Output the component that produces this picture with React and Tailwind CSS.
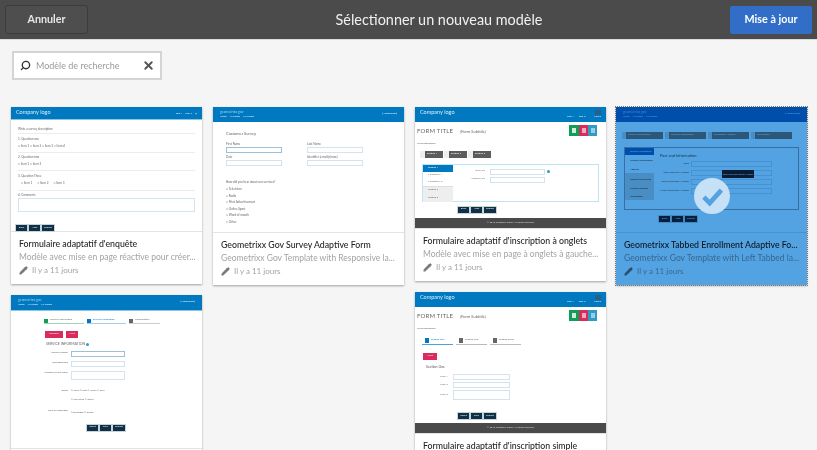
import { Search, X, Pencil } from 'lucide-react';

const T = ({ className = '', children }) => (
  <span className={`block whitespace-nowrap leading-none ${className}`}>{children}</span>
);

const Btns = ({ labels, className = '' }) => (
  <div className={`flex gap-[2px] ${className}`}>
    {labels.map((l) => (
      <span
        key={l}
        className="flex h-[6px] items-center justify-center bg-[#0f3047] px-[2px] text-[2.5px] leading-none text-white min-w-[11px] outline outline-[0.5px] outline-[#c9d3da]"
      >
        {l}
      </span>
    ))}
  </div>
);

const Input = ({ className = '' }) => (
  <div className={`h-[6px] border-[0.5px] border-[#d5e3ec] bg-white ${className}`} />
);

const Rule = ({ className = '' }) => <div className={`h-px bg-[#ececec] ${className}`} />;

const Tiles = () => (
  <div className="flex">
    <div className="flex h-[11px] w-[10px] items-center justify-center bg-[#0f9d58]"><div className="h-[5px] w-[4px] bg-white/80" /></div>
    <div className="flex h-[11px] w-[9px] items-center justify-center bg-[#d92b5c]"><div className="h-[5px] w-[4px] bg-white/60" /></div>
    <div className="flex h-[11px] w-[9px] items-center justify-center bg-[#2e9cc4]"><div className="h-[5px] w-[4px] bg-white/50" /></div>
  </div>
);

const LogoHeader = ({ small = false }) => (
  <div className={`flex justify-between bg-[#0079c1] pl-[5px] pr-[5px] ${small ? 'h-[12px] items-center' : 'h-[15px] pt-[3px]'}`}>
    <T className="text-[5.5px] text-[#d8ecf8]">Company logo</T>
    {small ? (
      <div className="mt-[2px] flex gap-[3px] text-[2.5px] leading-none text-white">
        <span>Link 1</span><span>Link 2</span><span>Q</span>
      </div>
    ) : (
      <div className="flex flex-col items-end gap-[1px]">
        <div className="h-[5px] w-[6px] rounded-[0.5px] bg-[#2a5f8a]" />
        <div className="flex gap-[5px] text-[2.5px] leading-none text-white">
          <span>Link 1</span><span>Link 2</span><span className="ml-[4px]">Link 3</span>
        </div>
      </div>
    )}
  </div>
);

const GeoHeader = () => (
  <div className="flex h-[15px] items-center justify-between bg-[#0079c1] px-[7px]">
    <div className="flex flex-col gap-[2px]">
      <T className="text-[3.5px] text-[#9fd0ee]">geometrixx gov</T>
      <div className="flex gap-[3px] text-[2.5px] leading-none text-white">
        <span>Home</span><span>All Forms</span><span>My Forms</span>
      </div>
    </div>
    <T className="text-[2.5px] text-white">[Anonymous]</T>
  </div>
);

const Thumb1 = () => (
  <div className="h-[124px] bg-white">
    <LogoHeader small />
    <div className="h-px bg-[#8cc4e6]" />
    <div className="px-[7px] pt-[8px] text-[3px] text-[#666]">
      <T>Write a survey description</T>
      <Rule className="mt-[2px]" />
      <T className="mt-[4px]">1. Question one</T>
      <T className="mt-[4px]">○ Item 1 ○ Item 2 ○ Item 3 ○ Item 4</T>
      <Rule className="mt-[4px]" />
      <T className="mt-[3px]">2. Question two</T>
      <T className="mt-[4px]">○ Item 1 ○ Item 2</T>
      <Rule className="mt-[4px]" />
      <T className="mt-[4px]">3. Question Three</T>
      <div className="mt-[4px] flex gap-[5px] pl-[3px] leading-none">
        <span>○ Item 1</span><span>○ Item 2</span><span>○ Item 3</span>
      </div>
      <Rule className="mt-[5px]" />
      <T className="mt-[3px]">4. Comments</T>
      <Input className="mt-[1px] !h-[14px]" />
      <Btns labels={['Back', 'Next', 'Submit']} className="mt-[13px] -ml-[2px]" />
    </div>
  </div>
);

const Thumb2 = () => (
  <div className="h-[125px] bg-white">
    <GeoHeader />
    <div className="pl-[13px] pt-[10px] text-[3px] text-[#666]">
      <T className="text-[4px]">Customer Survey</T>
      <div className="mt-[7px] grid w-[137px] grid-cols-2 gap-x-[25px] gap-y-[3px]">
        <div>
          <T>First Name</T>
          <Input className="mt-[1px] !border-[#9fbfd4]" />
        </div>
        <div>
          <T>Last Name</T>
          <Input className="mt-[1px]" />
        </div>
        <div>
          <T>Date</T>
          <Input className="mt-[1px]" />
        </div>
        <div>
          <T>Identifier (email/phone)</T>
          <Input className="mt-[1px]" />
        </div>
      </div>
      <T className="mt-[15px]">How did you hear about our services?</T>
      <div className="mt-[4px] flex flex-col gap-[3.5px]">
        <T>○ Television</T>
        <T>○ Radio</T>
        <T>○ Print Advertisement</T>
        <T>○ Online Sport</T>
        <T>○ Word of mouth</T>
        <T>○ Other</T>
      </div>
    </div>
  </div>
);

const FormTitle = () => (
  <div className="flex justify-between pl-[2px] pr-[9px] pt-[3px]">
    <div className="pt-[3px] text-[#666]">
      <div className="flex items-end gap-[7px]">
        <T className="text-[6px] tracking-[0.2px]">FORM TITLE</T>
        <T className="text-[4px]">(Form Subtitle)</T>
      </div>
      <T className="mt-[9px] text-[2.5px]">Form description</T>
    </div>
    <Tiles />
  </div>
);

const Footer = ({ text }) => (
  <div className="flex h-[10px] items-center justify-center bg-[#4a4a4a] text-[2.5px] leading-none text-[#ddd]">
    {text}
  </div>
);

const Thumb3 = () => (
  <div className="flex h-[121px] flex-col bg-white">
    <LogoHeader />
    <FormTitle />
    <div className="mt-[5px] flex gap-[1px] pl-[5px]">
      {['Section 1', 'Section 2', 'Section 3'].map((s) => (
        <div key={s} className="flex h-[7px] w-[23px] items-center gap-[2px] bg-[#5c5c5c] text-[2.5px] leading-none text-white">
          <div className="h-[7px] w-[5px] bg-[#eee]" />
          {s}
        </div>
      ))}
    </div>
    <div className="mx-[7px] mt-[6px] flex h-[38px] border-[0.5px] border-[#bfe4f2]">
      <div className="w-[30px] text-[2.5px] leading-none text-[#666]">
        <div className="flex h-[7px] items-center bg-[#0079c1] pl-[5px] text-white">Section 1</div>
        <div className="flex h-[8px] items-center pl-[5px]">• Section 1.1</div>
        <div className="flex h-[7px] items-center border-b-[0.5px] border-[#ddd] pl-[5px]">• Section 1.2</div>
        <div className="flex h-[8px] items-center bg-[#eee] pl-[5px]">Section 2</div>
        <div className="flex h-[7px] items-center bg-[#eee] pl-[5px]">Section 3</div>
      </div>
      <div className="flex flex-col gap-[2px] pt-[4px] text-[2.5px] leading-none text-[#777]">
        <div className="flex items-center">
          <span className="w-[32px] text-right">Text Line</span>
          <Input className="ml-[5px] w-[55px]" />
          <div className="ml-[2px] size-[3px] rounded-full bg-[#2e9cc4]" />
        </div>
        <div className="flex items-center">
          <span className="w-[32px] text-right">Number Line</span>
          <Input className="ml-[5px] w-[55px]" />
        </div>
      </div>
    </div>
    <Btns labels={['Back', 'Next', 'Submit']} className="mt-[5px] pl-[43px]" />
    <div className="flex-1" />
    <Footer text="© 2015 Company name. All rights reserved." />
  </div>
);

const Thumb4 = () => (
  <div className="relative h-[125px] bg-white">
    <GeoHeader />
    <div className="flex gap-[2px] pl-[6px] pt-[10px]">
      {['General Information', 'Personal Information', 'Residential Address', 'Verification'].map((s) => (
        <div key={s} className="flex h-[7px] w-[41px] items-center gap-[2px] bg-[#888] text-[2.5px] leading-none text-white">
          <div className="h-[7px] w-[4px] bg-[#ddd]" />
          {s}
        </div>
      ))}
    </div>
    <div className="mx-[8px] mt-[8px] flex h-[63px] border-[0.5px] border-[#aab]">
      <div className="w-[29px] text-[2.5px] leading-[3px] text-[#333]">
        <div className="flex h-[7px] items-center bg-[#0079c1] pl-[5px] text-white">Spouse Information</div>
        <div className="flex h-[11px] items-center pl-[5px]">Personal Information</div>
        <div className="flex h-[7px] items-center pl-[5px]">Address</div>
        <div className="flex h-[12px] items-center bg-[#ddd] pl-[5px]">Reason to Relocate</div>
        <div className="flex h-[7px] items-center bg-[#ddd] pl-[5px]">Financial Details</div>
        <div className="flex h-[8px] items-center bg-[#ddd] pl-[5px]">Verification</div>
      </div>
      <div className="pl-[6px] pt-[6px] text-[2.5px] text-[#555]">
        <T className="text-[4px]">Past and Information</T>
        <div className="mt-[3px] flex flex-col items-end gap-[3px]">
          {['Name', 'Social Security Number', 'Home Telephone Number', 'Mobile Telephone Number'].map((l) => (
            <div key={l} className="flex items-center gap-[2px]">
              <span className="leading-none">{l}</span>
              <Input className="w-[81px]" />
            </div>
          ))}
        </div>
      </div>
    </div>
    <Btns labels={['Back', 'Next', 'Submit']} className="mt-[6px] pl-[43px]" />
    <div className="absolute left-[106px] top-[63px] flex h-[8px] w-[32px] items-center justify-center bg-[#1d2b3a] text-center text-[2px] leading-none text-white">
      Enter your Social Security Number
    </div>
  </div>
);

const Thumb5 = () => (
  <div className="h-[153px] bg-white">
    <GeoHeader />
    <div className="h-[1px] bg-[#8cc4e6]" />
    <div className="pl-[33px] pt-[7px] text-[2.5px] text-[#666]">
      <div className="flex gap-[3px]">
        <div className="flex h-[6px] w-[40px] items-center gap-[2px] border-b border-[#9fd8b8] leading-none">
          <div className="size-[4px] bg-[#0f9d58]" />General Information
        </div>
        <div className="flex h-[6px] w-[39px] items-center gap-[2px] border-b border-[#9fd0ee] leading-none text-[#0079c1]">
          <div className="size-[4px] bg-[#0079c1]" />Service Information
        </div>
        <div className="flex h-[6px] w-[31px] items-center gap-[2px] border-b border-[#ccc] leading-none">
          <div className="size-[4px] bg-[#666]" />Confirmation
        </div>
      </div>
      <div className="mt-[7px] flex gap-[3px] pl-[1px]">
        <div className="flex h-[7px] w-[18px] items-center justify-center bg-[#d92b5c] leading-none text-white">Previous</div>
        <div className="flex h-[7px] w-[12px] items-center justify-center bg-[#d92b5c] leading-none text-white">Next</div>
      </div>
      <div className="mt-[5px] flex items-center gap-[1px] pl-[2px]">
        <T className="text-[3.5px]">SERVICE INFORMATION</T>
        <div className="size-[3px] rounded-full bg-[#2e9cc4]" />
      </div>
      <div className="mt-[4px] grid w-[81px] grid-cols-[24px_1fr] items-start gap-x-[3px] gap-y-[4px] leading-[4px]">
        <span className="text-right">Vehicle number</span>
        <Input className="!border-[#9fbfd4]" />
        <span className="text-right">Damaged part</span>
        <Input />
        <span className="text-right">Location of the repair</span>
        <Input className="!h-[9px]" />
        <span className="mt-[5px] text-right">Brand</span>
        <span className="mt-[5px] whitespace-nowrap">○ Volvo ○ Tata ○ Ashok ○ Toyo</span>
        <span />
        <span className="mt-[1px] whitespace-nowrap">○ Cool Scan ○ Other</span>
        <span className="mt-[3px] text-right">Type of Inspection</span>
        <span className="mt-[5px] whitespace-nowrap">○ Damaged ○ Rental</span>
      </div>
      <Btns labels={['Reset', 'Save', 'Submit']} className="mt-[10px] pl-[43px]" />
    </div>
  </div>
);

const Thumb6 = () => (
  <div className="flex h-[141px] flex-col bg-white">
    <LogoHeader />
    <FormTitle />
    <div className="mt-[6px] flex gap-[3px] pl-[7px] text-[2.5px] text-[#666]">
      {['Section One', 'Section Two', 'Section Three'].map((s, i) => (
        <div key={s} className={`flex h-[8px] w-[31px] items-center gap-[2px] border-b pl-[3px] leading-none ${i === 0 ? 'border-[#4aa3d8] text-[#0079c1]' : 'border-[#bbb]'}`}>
          <div className={`h-[5px] w-[4px] ${i === 0 ? 'bg-[#0079c1]' : 'bg-[#666]'}`} />
          {s}
        </div>
      ))}
    </div>
    <div className="ml-[8px] mt-[8px] flex h-[7px] w-[14px] items-center justify-center bg-[#d92b5c] text-[2.5px] leading-none text-white">
      Next
    </div>
    <T className="ml-[11px] mt-[6px] text-[3.5px] text-[#555]">Section One</T>
    <div className="mt-[5px] grid w-[95px] grid-cols-[33px_1fr] items-center gap-x-[5px] gap-y-[2px] text-right text-[2.5px] leading-none text-[#777]">
      <span>Label 1</span><Input />
      <span>Label 2</span><Input />
      <span>Label 3</span><Input className="!h-[10px]" />
    </div>
    <Btns labels={['Reset', 'Save', 'Submit']} className="mt-[13px] pl-[43px]" />
    <div className="flex-1" />
    <Footer text="© 2015 Company name. All rights reserved." />
  </div>
);

const Card = ({ thumb, title, desc, selected = false }) => (
  <div className={`relative overflow-hidden bg-white shadow-[0_1px_2px_rgba(0,0,0,0.35)] ${selected ? 'outline-1 outline-dotted outline-[#777]' : ''}`}>
    <div className="blur-[0.3px]">{thumb}</div>
    <div className="border-t border-[#e3e3e3] px-[8px] pb-[8px] pt-[5px]">
      {title && <div className="whitespace-nowrap text-[8.75px] font-medium leading-[14px] text-[#1f1f1f]">{title}</div>}
      {desc && (
        <>
          <div className="whitespace-nowrap text-[8.5px] leading-[13px] text-[#a3a3a3]">{desc}</div>
          <div className="flex items-center gap-[4px] text-[8px] leading-[12px] text-[#a3a3a3]">
            <Pencil size={9} className="text-[#777]" fill="currentColor" />
            <span>Il y a 11 jours</span>
          </div>
        </>
      )}
    </div>
    {selected && (
      <>
        <div className="absolute inset-0 bg-[#53a3e3] mix-blend-multiply" />
        <div className="absolute left-[78px] top-[71px] flex size-[36px] items-center justify-center rounded-full bg-[#c6e0f6]">
          <svg viewBox="0 0 24 24" className="size-[28px]" fill="none" stroke="#53a3e3" strokeWidth="4">
            <path d="M5 13l5 5 10-11" />
          </svg>
        </div>
      </>
    )}
  </div>
);

export default function App() {
  return (
    <div className="h-[450px] overflow-hidden bg-[#f5f5f5] font-['Lato',sans-serif]">
      <header className="box-content flex h-[39px] items-center justify-between border-b border-[#dcdcdc] bg-[#4b4b4b] pl-[5px] pr-[5px]">
        <button className="h-[29px] w-[83px] rounded-[3px] border border-[#3c3c3c] bg-[#4e4e4e] text-[10.75px] font-bold text-[#e6e6e6]">
          Annuler
        </button>
        <h1 className="ml-[60px] text-[14.4px] text-[#f0f0f0]">Sélectionner un nouveau modèle</h1>
        <button className="h-[28px] w-[82px] rounded-[2px] bg-[#326ec8] text-[10.75px] font-bold text-white">
          Mise à jour
        </button>
      </header>

      <div className="ml-[12px] mt-[11px] flex h-[29px] w-[150px] items-center border-2 border-[#d4d4d4] bg-white pl-[6px] pr-[5px]">
        <Search size={11} strokeWidth={3} className="-scale-x-100 text-[#333]" />
        <span className="ml-[5px] flex-1 whitespace-nowrap text-[9px] text-[#9a9a9a]">Modèle de recherche</span>
        <X size={13} strokeWidth={3.5} className="text-[#555]" />
      </div>

      <div className="mt-[27px] flex gap-[11px] pl-[11px]">
        <div className="flex w-[191px] flex-col gap-[11px]">
          <Card
            thumb={<Thumb1 />}
            title="Formulaire adaptatif d'enquête"
            desc="Modèle avec mise en page réactive pour créer..."
          />
          <Card thumb={<Thumb5 />} />
        </div>
        <div className="flex w-[191px] flex-col gap-[11px]">
          <Card
            thumb={<Thumb2 />}
            title="Geometrixx Gov Survey Adaptive Form"
            desc="Geometrixx Gov Template with Responsive la..."
          />
        </div>
        <div className="flex w-[191px] flex-col gap-[11px]">
          <Card
            thumb={<Thumb3 />}
            title="Formulaire adaptatif d'inscription à onglets"
            desc="Modèle avec mise en page à onglets à gauche..."
          />
          <Card thumb={<Thumb6 />} title="Formulaire adaptatif d'inscription simple" />
        </div>
        <div className="-ml-px flex w-[191px] flex-col gap-[11px]">
          <Card
            selected
            thumb={<Thumb4 />}
            title="Geometrixx Tabbed Enrollment Adaptive Fo..."
            desc="Geometrixx Gov Template with Left Tabbed la..."
          />
        </div>
      </div>
    </div>
  );
}
